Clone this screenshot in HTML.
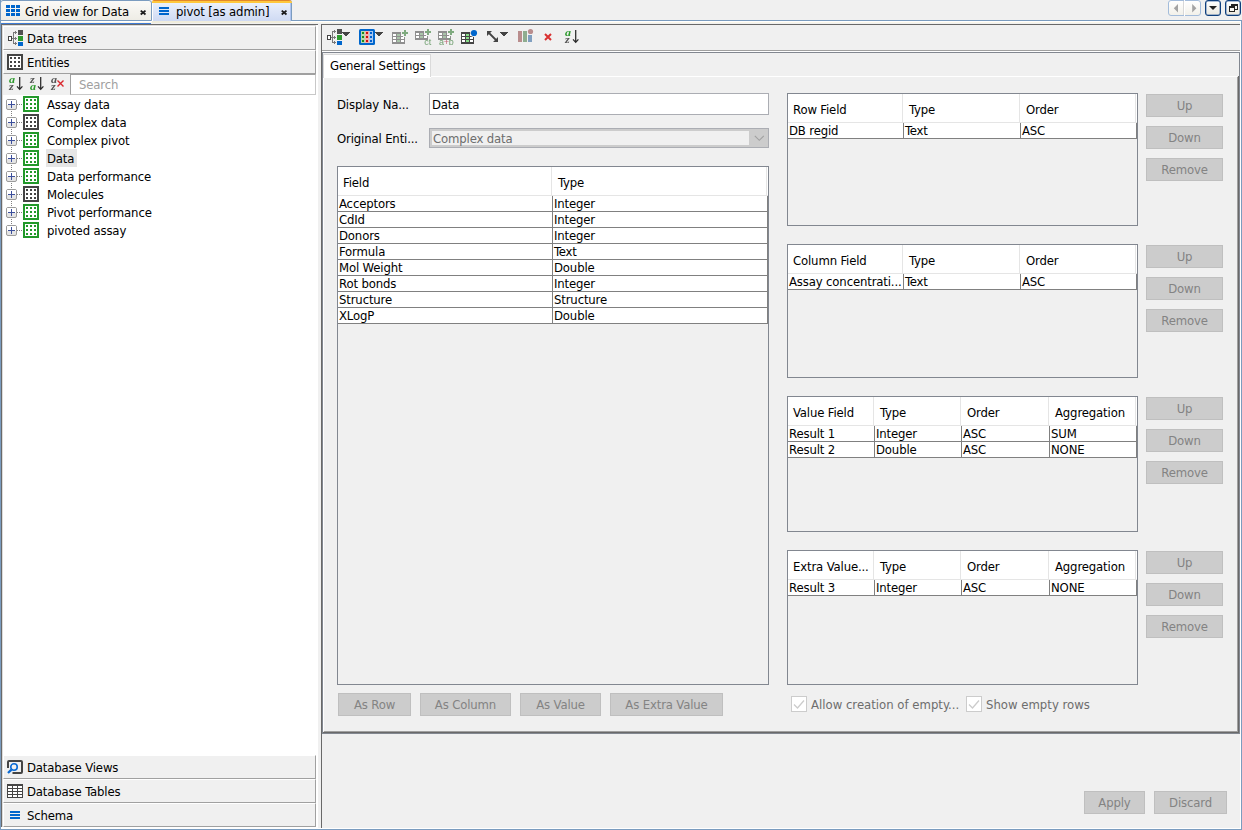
<!DOCTYPE html>
<html><head><meta charset="utf-8"><title>pivot</title><style>
html,body{margin:0;padding:0}
body{width:1242px;height:830px;overflow:hidden;background:#f0f0f0;position:relative;font-family:"DejaVu Sans Condensed","DejaVu Sans","Liberation Sans",sans-serif;font-size:13px;font-stretch:condensed;line-height:16px;letter-spacing:-0.15px;color:#000}
.a{position:absolute;box-sizing:border-box}
.t{position:absolute;white-space:nowrap;line-height:16px;height:16px}
svg{position:absolute;overflow:visible}
.btn{position:absolute;box-sizing:border-box;background:#cccccc;border:1px solid #bfbfbf;color:#838383;text-align:center;line-height:16px;white-space:nowrap}
.btn span{position:relative;display:block}
</style></head><body>
<div class="a" style="left:0px;top:0px;width:1px;height:830px;background:#7b9cbf"></div>
<div class="a" style="left:1px;top:828px;width:1240px;height:1px;background:#ffffff"></div>
<div class="a" style="left:0px;top:829px;width:1242px;height:1px;background:#7b9cbf"></div>
<div class="a" style="left:1241px;top:20px;width:1px;height:810px;background:#7b9cbf"></div>
<div class="a" style="left:0px;top:0px;width:152px;height:21px;background:linear-gradient(#fbfaf7,#eeece5);border:1px solid #7b9cbf;border-radius:3px 3px 0 0"></div>
<svg style="left:6px;top:5px" width="14" height="11" shape-rendering="crispEdges"><rect x="0" y="0" width="4" height="3" fill="#0066cc"/><rect x="5" y="0" width="4" height="3" fill="#0066cc"/><rect x="10" y="0" width="4" height="3" fill="#0066cc"/><rect x="0" y="4" width="4" height="3" fill="#0066cc"/><rect x="5" y="4" width="4" height="3" fill="#0066cc"/><rect x="10" y="4" width="4" height="3" fill="#0066cc"/><rect x="0" y="8" width="4" height="3" fill="#0066cc"/><rect x="5" y="8" width="4" height="3" fill="#0066cc"/><rect x="10" y="8" width="4" height="3" fill="#0066cc"/></svg>
<div class="t" style="left:25px;top:4px;">Grid view for Data</div>
<div class="a" style="left:152px;top:0px;width:140px;height:21px;background:linear-gradient(#eef3fd,#cfdaf3);border-left:1px solid #fff;border-right:1px solid #7b9cbf;border-radius:0 3px 0 0"></div>
<div class="a" style="left:290px;top:3px;width:1px;height:18px;background:#aec4f0"></div>
<div class="a" style="left:152px;top:0px;width:140px;height:3px;background:linear-gradient(#e2872b 0,#e2872b 1px,#ffc83d 1px,#ffc83d 3px);border-radius:2px 3px 0 0"></div>
<div class="a" style="left:152px;top:21px;width:139px;height:2px;background:#efecdc"></div>
<svg style="left:159px;top:7px" width="10" height="8" shape-rendering="crispEdges"><rect x="0" y="0" width="10" height="2" fill="#0066cc"/><rect x="0" y="3" width="10" height="2" fill="#0066cc"/><rect x="0" y="6" width="10" height="2" fill="#0066cc"/></svg>
<div class="t" style="left:176px;top:4px;">pivot [as admin]</div>
<svg style="left:140px;top:10px" width="6" height="5"><path d="M0.7 0.6 L5.5 4.5 M5.5 0.6 L0.7 4.5" stroke="#1a1a1a" stroke-width="1.8" fill="none"/></svg>
<svg style="left:281px;top:10px" width="6" height="5"><path d="M0.7 0.6 L5.5 4.5 M5.5 0.6 L0.7 4.5" stroke="#1a1a1a" stroke-width="1.8" fill="none"/></svg>
<div class="a" style="left:292px;top:20px;width:950px;height:1px;background:#7b9cbf"></div>
<div class="a" style="left:1px;top:21px;width:151px;height:1px;background:#ffffff"></div>
<div class="a" style="left:291px;top:21px;width:950px;height:1px;background:#ffffff"></div>
<div class="a" style="left:1px;top:22px;width:151px;height:1px;background:#fbf7ea"></div>
<div class="a" style="left:291px;top:22px;width:950px;height:1px;background:#fbf7ea"></div>
<div class="a" style="left:1px;top:23px;width:150px;height:1px;background:#3f7cd8"></div>
<div class="a" style="left:1px;top:24px;width:317px;height:1px;background:#696969"></div>
<div class="a" style="left:321px;top:24px;width:919px;height:1px;background:#696969"></div>
<div class="a" style="left:1px;top:24px;width:1px;height:804px;background:#696969"></div>
<div class="a" style="left:2px;top:25px;width:1px;height:803px;background:#dcdcdc"></div>
<div class="a" style="left:2px;top:25px;width:314px;height:1px;background:#dcdcdc"></div>
<div class="a" style="left:316px;top:25px;width:1px;height:803px;background:#ffffff"></div>
<div class="a" style="left:317px;top:25px;width:1px;height:803px;background:#ffffff"></div>
<div class="a" style="left:1px;top:827px;width:317px;height:1px;background:#ffffff"></div>
<div class="a" style="left:3px;top:26px;width:313px;height:24px;border-left:1px solid #fff;border-top:1px solid #fff;border-right:1px solid #a0a0a0;border-bottom:1px solid #a0a0a0;background:#f0f0f0"></div>
<svg style="left:8px;top:30px" width="16" height="16" shape-rendering="crispEdges"><rect x="0" y="6" width="4" height="5" fill="#444"/><rect x="1" y="7" width="2" height="3" fill="#fff"/><path d="M4 8H5V9H4Z M5 2H6V14H5Z M6 2H9V3H6Z M6 8H9V9H6Z M6 13H9V14H6Z M7 1H8V4H7Z M7 7H8V10H7Z M7 12H8V15H7Z" fill="#787878"/><rect x="10" y="0" width="5" height="5" fill="#505050"/><rect x="10" y="6" width="5" height="5" fill="#2e9a2e"/><rect x="10" y="12" width="5" height="4" fill="#0066cc"/></svg>
<div class="t" style="left:27px;top:31px;">Data trees</div>
<div class="a" style="left:3px;top:50px;width:313px;height:24px;border-left:1px solid #fff;border-top:1px solid #fff;border-right:1px solid #a0a0a0;border-bottom:1px solid #a0a0a0;background:#f0f0f0"></div>
<svg style="left:7px;top:54px" width="16" height="16" shape-rendering="crispEdges"><rect x="0" y="0" width="16" height="16" fill="#444444"/><rect x="2" y="2" width="12" height="12" fill="#fff"/><rect x="3" y="3" width="2" height="2" fill="#444444"/><rect x="7" y="3" width="2" height="2" fill="#444444"/><rect x="11" y="3" width="2" height="2" fill="#444444"/><rect x="3" y="7" width="2" height="2" fill="#444444"/><rect x="7" y="7" width="2" height="2" fill="#444444"/><rect x="11" y="7" width="2" height="2" fill="#444444"/><rect x="3" y="11" width="2" height="2" fill="#444444"/><rect x="7" y="11" width="2" height="2" fill="#444444"/><rect x="11" y="11" width="2" height="2" fill="#444444"/></svg>
<div class="t" style="left:27px;top:55px;">Entities</div>
<div class="a" style="left:70px;top:74px;width:246px;height:21px;background:#fff;border:1px solid #a0a0a0;border-right-color:#c8c8c8;border-bottom-color:#c8c8c8"></div>
<div class="t" style="left:79px;top:77px;color:#a0a0a0;">Search</div>
<svg style="left:9px;top:77px;will-change:transform" width="16" height="14"><text x="0" y="6" transform="scale(1.1,1)" font-family="Liberation Serif,serif" font-style="italic" font-weight="bold" font-size="11" fill="#2e9a2e" letter-spacing="0">a</text><text x="0" y="13" transform="scale(1.1,1)" font-family="Liberation Serif,serif" font-style="italic" font-weight="bold" font-size="11" fill="#555" letter-spacing="0">z</text><path d="M10.7 0V12.3 M8 9.4L10.7 12.4L13.4 9.4" stroke="#2a2a2a" stroke-width="1.25" fill="none"/></svg>
<svg style="left:30px;top:77px;will-change:transform" width="16" height="14"><text x="0" y="6" transform="scale(1.1,1)" font-family="Liberation Serif,serif" font-style="italic" font-weight="bold" font-size="11" fill="#555" letter-spacing="0">z</text><text x="0" y="13" transform="scale(1.1,1)" font-family="Liberation Serif,serif" font-style="italic" font-weight="bold" font-size="11" fill="#2e9a2e" letter-spacing="0">a</text><path d="M10.7 0V12.3 M8 9.4L10.7 12.4L13.4 9.4" stroke="#2a2a2a" stroke-width="1.25" fill="none"/></svg>
<svg style="left:51px;top:77px;will-change:transform" width="16" height="14"><text x="0" y="6" transform="scale(1.1,1)" font-family="Liberation Serif,serif" font-style="italic" font-weight="bold" font-size="11" fill="#555" letter-spacing="0">a</text><text x="0" y="13" transform="scale(1.1,1)" font-family="Liberation Serif,serif" font-style="italic" font-weight="bold" font-size="11" fill="#555" letter-spacing="0">z</text></svg>
<svg style="left:57px;top:80px" width="7" height="7"><path d="M0.5 0.5L6.5 6.5M6.5 0.5L0.5 6.5" stroke="#d9262c" stroke-width="1.4" fill="none"/></svg>
<div class="a" style="left:3px;top:95px;width:313px;height:661px;background:#fff"></div>
<svg style="left:6px;top:99px" width="16" height="18" shape-rendering="crispEdges"><rect x="0.5" y="0.5" width="10" height="10" rx="1.5" fill="#e4e4e4" stroke="#9b9b9b" shape-rendering="auto"/><rect x="1" y="1" width="9" height="5" fill="#fff"/><path d="M2 5.5H9 M5.5 2V9" stroke="#3c4f9c" fill="none"/><path d="M11 5.5H12 M13 5.5H14 M15 5.5H16" stroke="#808080"/><path d="M5.5 12V13 M5.5 14V15 M5.5 16V17" stroke="#808080"/></svg>
<svg style="left:23px;top:96px" width="16" height="16" shape-rendering="crispEdges"><rect x="0" y="0" width="16" height="16" fill="#22992a"/><rect x="2" y="2" width="12" height="12" fill="#fff"/><rect x="3" y="3" width="2" height="2" fill="#22992a"/><rect x="7" y="3" width="2" height="2" fill="#22992a"/><rect x="11" y="3" width="2" height="2" fill="#22992a"/><rect x="3" y="7" width="2" height="2" fill="#22992a"/><rect x="7" y="7" width="2" height="2" fill="#22992a"/><rect x="11" y="7" width="2" height="2" fill="#22992a"/><rect x="3" y="11" width="2" height="2" fill="#22992a"/><rect x="7" y="11" width="2" height="2" fill="#22992a"/><rect x="11" y="11" width="2" height="2" fill="#22992a"/></svg>
<div class="t" style="left:47px;top:97px;">Assay data</div>
<svg style="left:6px;top:117px" width="16" height="18" shape-rendering="crispEdges"><rect x="0.5" y="0.5" width="10" height="10" rx="1.5" fill="#e4e4e4" stroke="#9b9b9b" shape-rendering="auto"/><rect x="1" y="1" width="9" height="5" fill="#fff"/><path d="M2 5.5H9 M5.5 2V9" stroke="#3c4f9c" fill="none"/><path d="M11 5.5H12 M13 5.5H14 M15 5.5H16" stroke="#808080"/><path d="M5.5 12V13 M5.5 14V15 M5.5 16V17" stroke="#808080"/></svg>
<svg style="left:23px;top:114px" width="16" height="16" shape-rendering="crispEdges"><rect x="0" y="0" width="16" height="16" fill="#444444"/><rect x="2" y="2" width="12" height="12" fill="#fff"/><rect x="3" y="3" width="2" height="2" fill="#444444"/><rect x="7" y="3" width="2" height="2" fill="#444444"/><rect x="11" y="3" width="2" height="2" fill="#444444"/><rect x="3" y="7" width="2" height="2" fill="#444444"/><rect x="7" y="7" width="2" height="2" fill="#444444"/><rect x="11" y="7" width="2" height="2" fill="#444444"/><rect x="3" y="11" width="2" height="2" fill="#444444"/><rect x="7" y="11" width="2" height="2" fill="#444444"/><rect x="11" y="11" width="2" height="2" fill="#444444"/></svg>
<div class="t" style="left:47px;top:115px;">Complex data</div>
<svg style="left:6px;top:135px" width="16" height="18" shape-rendering="crispEdges"><rect x="0.5" y="0.5" width="10" height="10" rx="1.5" fill="#e4e4e4" stroke="#9b9b9b" shape-rendering="auto"/><rect x="1" y="1" width="9" height="5" fill="#fff"/><path d="M2 5.5H9 M5.5 2V9" stroke="#3c4f9c" fill="none"/><path d="M11 5.5H12 M13 5.5H14 M15 5.5H16" stroke="#808080"/><path d="M5.5 12V13 M5.5 14V15 M5.5 16V17" stroke="#808080"/></svg>
<svg style="left:23px;top:132px" width="16" height="16" shape-rendering="crispEdges"><rect x="0" y="0" width="16" height="16" fill="#22992a"/><rect x="2" y="2" width="12" height="12" fill="#fff"/><rect x="3" y="3" width="2" height="2" fill="#22992a"/><rect x="7" y="3" width="2" height="2" fill="#22992a"/><rect x="11" y="3" width="2" height="2" fill="#22992a"/><rect x="3" y="7" width="2" height="2" fill="#22992a"/><rect x="7" y="7" width="2" height="2" fill="#22992a"/><rect x="11" y="7" width="2" height="2" fill="#22992a"/><rect x="3" y="11" width="2" height="2" fill="#22992a"/><rect x="7" y="11" width="2" height="2" fill="#22992a"/><rect x="11" y="11" width="2" height="2" fill="#22992a"/></svg>
<div class="t" style="left:47px;top:133px;">Complex pivot</div>
<svg style="left:6px;top:153px" width="16" height="18" shape-rendering="crispEdges"><rect x="0.5" y="0.5" width="10" height="10" rx="1.5" fill="#e4e4e4" stroke="#9b9b9b" shape-rendering="auto"/><rect x="1" y="1" width="9" height="5" fill="#fff"/><path d="M2 5.5H9 M5.5 2V9" stroke="#3c4f9c" fill="none"/><path d="M11 5.5H12 M13 5.5H14 M15 5.5H16" stroke="#808080"/><path d="M5.5 12V13 M5.5 14V15 M5.5 16V17" stroke="#808080"/></svg>
<svg style="left:23px;top:150px" width="16" height="16" shape-rendering="crispEdges"><rect x="0" y="0" width="16" height="16" fill="#22992a"/><rect x="2" y="2" width="12" height="12" fill="#fff"/><rect x="3" y="3" width="2" height="2" fill="#22992a"/><rect x="7" y="3" width="2" height="2" fill="#22992a"/><rect x="11" y="3" width="2" height="2" fill="#22992a"/><rect x="3" y="7" width="2" height="2" fill="#22992a"/><rect x="7" y="7" width="2" height="2" fill="#22992a"/><rect x="11" y="7" width="2" height="2" fill="#22992a"/><rect x="3" y="11" width="2" height="2" fill="#22992a"/><rect x="7" y="11" width="2" height="2" fill="#22992a"/><rect x="11" y="11" width="2" height="2" fill="#22992a"/></svg>
<div class="a" style="left:46px;top:149px;width:31px;height:18px;background:#e5e5e5"></div>
<div class="t" style="left:47px;top:151px;">Data</div>
<svg style="left:6px;top:171px" width="16" height="18" shape-rendering="crispEdges"><rect x="0.5" y="0.5" width="10" height="10" rx="1.5" fill="#e4e4e4" stroke="#9b9b9b" shape-rendering="auto"/><rect x="1" y="1" width="9" height="5" fill="#fff"/><path d="M2 5.5H9 M5.5 2V9" stroke="#3c4f9c" fill="none"/><path d="M11 5.5H12 M13 5.5H14 M15 5.5H16" stroke="#808080"/><path d="M5.5 12V13 M5.5 14V15 M5.5 16V17" stroke="#808080"/></svg>
<svg style="left:23px;top:168px" width="16" height="16" shape-rendering="crispEdges"><rect x="0" y="0" width="16" height="16" fill="#22992a"/><rect x="2" y="2" width="12" height="12" fill="#fff"/><rect x="3" y="3" width="2" height="2" fill="#22992a"/><rect x="7" y="3" width="2" height="2" fill="#22992a"/><rect x="11" y="3" width="2" height="2" fill="#22992a"/><rect x="3" y="7" width="2" height="2" fill="#22992a"/><rect x="7" y="7" width="2" height="2" fill="#22992a"/><rect x="11" y="7" width="2" height="2" fill="#22992a"/><rect x="3" y="11" width="2" height="2" fill="#22992a"/><rect x="7" y="11" width="2" height="2" fill="#22992a"/><rect x="11" y="11" width="2" height="2" fill="#22992a"/></svg>
<div class="t" style="left:47px;top:169px;">Data performance</div>
<svg style="left:6px;top:189px" width="16" height="18" shape-rendering="crispEdges"><rect x="0.5" y="0.5" width="10" height="10" rx="1.5" fill="#e4e4e4" stroke="#9b9b9b" shape-rendering="auto"/><rect x="1" y="1" width="9" height="5" fill="#fff"/><path d="M2 5.5H9 M5.5 2V9" stroke="#3c4f9c" fill="none"/><path d="M11 5.5H12 M13 5.5H14 M15 5.5H16" stroke="#808080"/><path d="M5.5 12V13 M5.5 14V15 M5.5 16V17" stroke="#808080"/></svg>
<svg style="left:23px;top:186px" width="16" height="16" shape-rendering="crispEdges"><rect x="0" y="0" width="16" height="16" fill="#444444"/><rect x="2" y="2" width="12" height="12" fill="#fff"/><rect x="3" y="3" width="2" height="2" fill="#444444"/><rect x="7" y="3" width="2" height="2" fill="#444444"/><rect x="11" y="3" width="2" height="2" fill="#444444"/><rect x="3" y="7" width="2" height="2" fill="#444444"/><rect x="7" y="7" width="2" height="2" fill="#444444"/><rect x="11" y="7" width="2" height="2" fill="#444444"/><rect x="3" y="11" width="2" height="2" fill="#444444"/><rect x="7" y="11" width="2" height="2" fill="#444444"/><rect x="11" y="11" width="2" height="2" fill="#444444"/></svg>
<div class="t" style="left:47px;top:187px;">Molecules</div>
<svg style="left:6px;top:207px" width="16" height="18" shape-rendering="crispEdges"><rect x="0.5" y="0.5" width="10" height="10" rx="1.5" fill="#e4e4e4" stroke="#9b9b9b" shape-rendering="auto"/><rect x="1" y="1" width="9" height="5" fill="#fff"/><path d="M2 5.5H9 M5.5 2V9" stroke="#3c4f9c" fill="none"/><path d="M11 5.5H12 M13 5.5H14 M15 5.5H16" stroke="#808080"/><path d="M5.5 12V13 M5.5 14V15 M5.5 16V17" stroke="#808080"/></svg>
<svg style="left:23px;top:204px" width="16" height="16" shape-rendering="crispEdges"><rect x="0" y="0" width="16" height="16" fill="#22992a"/><rect x="2" y="2" width="12" height="12" fill="#fff"/><rect x="3" y="3" width="2" height="2" fill="#22992a"/><rect x="7" y="3" width="2" height="2" fill="#22992a"/><rect x="11" y="3" width="2" height="2" fill="#22992a"/><rect x="3" y="7" width="2" height="2" fill="#22992a"/><rect x="7" y="7" width="2" height="2" fill="#22992a"/><rect x="11" y="7" width="2" height="2" fill="#22992a"/><rect x="3" y="11" width="2" height="2" fill="#22992a"/><rect x="7" y="11" width="2" height="2" fill="#22992a"/><rect x="11" y="11" width="2" height="2" fill="#22992a"/></svg>
<div class="t" style="left:47px;top:205px;">Pivot performance</div>
<svg style="left:6px;top:225px" width="16" height="18" shape-rendering="crispEdges"><rect x="0.5" y="0.5" width="10" height="10" rx="1.5" fill="#e4e4e4" stroke="#9b9b9b" shape-rendering="auto"/><rect x="1" y="1" width="9" height="5" fill="#fff"/><path d="M2 5.5H9 M5.5 2V9" stroke="#3c4f9c" fill="none"/><path d="M11 5.5H12 M13 5.5H14 M15 5.5H16" stroke="#808080"/></svg>
<svg style="left:23px;top:222px" width="16" height="16" shape-rendering="crispEdges"><rect x="0" y="0" width="16" height="16" fill="#22992a"/><rect x="2" y="2" width="12" height="12" fill="#fff"/><rect x="3" y="3" width="2" height="2" fill="#22992a"/><rect x="7" y="3" width="2" height="2" fill="#22992a"/><rect x="11" y="3" width="2" height="2" fill="#22992a"/><rect x="3" y="7" width="2" height="2" fill="#22992a"/><rect x="7" y="7" width="2" height="2" fill="#22992a"/><rect x="11" y="7" width="2" height="2" fill="#22992a"/><rect x="3" y="11" width="2" height="2" fill="#22992a"/><rect x="7" y="11" width="2" height="2" fill="#22992a"/><rect x="11" y="11" width="2" height="2" fill="#22992a"/></svg>
<div class="t" style="left:47px;top:223px;">pivoted assay</div>
<div class="a" style="left:3px;top:755px;width:313px;height:24px;border-left:1px solid #fff;border-top:1px solid #fff;border-right:1px solid #a0a0a0;border-bottom:1px solid #a0a0a0;background:#f0f0f0"></div>
<svg style="left:7px;top:760px" width="16" height="14"><path d="M1 8V2Q1 1 2 1H14Q15 1 15 2V12Q15 13 14 13H5.5" fill="none" stroke="#444" stroke-width="2"/><circle cx="7" cy="7" r="3.25" fill="none" stroke="#0a6ad4" stroke-width="1.6"/><path d="M4.5 9.7 L1 13" stroke="#0a6ad4" stroke-width="2.3"/></svg>
<div class="t" style="left:27px;top:760px;">Database Views</div>
<div class="a" style="left:3px;top:779px;width:313px;height:24px;border-left:1px solid #fff;border-top:1px solid #fff;border-right:1px solid #a0a0a0;border-bottom:1px solid #a0a0a0;background:#f0f0f0"></div>
<svg style="left:7px;top:784px" width="16" height="14" shape-rendering="crispEdges"><rect x="0" y="0" width="16" height="14" rx="1" fill="#444"/><rect x="1" y="2" width="4" height="2" fill="#fff"/><rect x="6" y="2" width="4" height="2" fill="#fff"/><rect x="11" y="2" width="4" height="2" fill="#fff"/><rect x="1" y="5" width="4" height="2" fill="#fff"/><rect x="6" y="5" width="4" height="2" fill="#fff"/><rect x="11" y="5" width="4" height="2" fill="#fff"/><rect x="1" y="8" width="4" height="2" fill="#fff"/><rect x="6" y="8" width="4" height="2" fill="#fff"/><rect x="11" y="8" width="4" height="2" fill="#fff"/><rect x="1" y="11" width="4" height="2" fill="#fff"/><rect x="6" y="11" width="4" height="2" fill="#fff"/><rect x="11" y="11" width="4" height="2" fill="#fff"/></svg>
<div class="t" style="left:27px;top:784px;">Database Tables</div>
<div class="a" style="left:3px;top:803px;width:313px;height:24px;border-left:1px solid #fff;border-top:1px solid #fff;border-right:1px solid #a0a0a0;border-bottom:1px solid #a0a0a0;background:#f0f0f0"></div>
<svg style="left:10px;top:811px" width="10" height="8" shape-rendering="crispEdges"><rect x="0" y="0" width="10" height="2" fill="#0066cc"/><rect x="0" y="3" width="10" height="2" fill="#0066cc"/><rect x="0" y="6" width="10" height="2" fill="#0066cc"/></svg>
<div class="t" style="left:27px;top:808px;">Schema</div>
<div class="a" style="left:321px;top:24px;width:1px;height:804px;background:#696969"></div>
<div class="a" style="left:1240px;top:21px;width:1px;height:807px;background:#ffffff"></div>
<div class="a" style="left:322px;top:50px;width:918px;height:1px;background:#a0a0a0"></div>
<div class="a" style="left:322px;top:51px;width:918px;height:1px;background:#ffffff"></div>
<div class="a" style="left:322px;top:52px;width:918px;height:682px;border:1px solid #828790"></div>
<div class="a" style="left:323px;top:76px;width:914px;height:1px;background:#fff"></div>
<div class="a" style="left:323px;top:76px;width:1px;height:655px;background:#fff"></div>
<div class="a" style="left:323px;top:54px;width:108px;height:24px;background:#fff;border:1px solid #dadada;border-bottom:none"></div>
<div class="a" style="left:430px;top:77px;width:1px;height:1px;background:#fff"></div>
<div class="t" style="left:330px;top:58px;">General Settings</div>
<div class="a" style="left:1237px;top:77px;width:1px;height:656px;background:#a0a0a0"></div>
<div class="a" style="left:1238px;top:76px;width:1px;height:657px;background:#696969"></div>
<div class="a" style="left:324px;top:731px;width:914px;height:1px;background:#a0a0a0"></div>
<div class="a" style="left:323px;top:732px;width:916px;height:1px;background:#696969"></div>
<div class="t" style="left:337px;top:97px;">Display Na...</div>
<div class="a" style="left:429px;top:93px;width:340px;height:22px;background:#fff;border:1px solid #abadb3"></div>
<div class="t" style="left:432px;top:97px;">Data</div>
<div class="t" style="left:337px;top:131px;">Original Enti...</div>
<div class="a" style="left:429px;top:128px;width:340px;height:20px;background:#cccccc;border:1px solid #abadb3"></div>
<div class="a" style="left:432px;top:131px;width:317px;height:14px;background:#f0f0f0"></div>
<div class="t" style="left:433px;top:131px;color:#6d6d6d;">Complex data</div>
<svg style="left:754px;top:135px" width="11" height="7"><path d="M0.8 0.8L5.3 5.3L9.8 0.8" stroke="#a0a0a0" stroke-width="1.1" fill="none"/></svg>
<div class="a" style="left:337px;top:166px;width:432px;height:519px;border:1px solid #828790;background:#f0f0f0"></div>
<div class="a" style="left:338px;top:167px;width:430px;height:28px;background:#fff"></div>
<div class="a" style="left:338px;top:195px;width:430px;height:1px;background:#e5e5e5"></div>
<div class="a" style="left:551px;top:167px;width:1px;height:28px;background:#e5e5e5"></div>
<div class="t" style="left:343px;top:175px;">Field</div>
<div class="a" style="left:766px;top:167px;width:1px;height:28px;background:#e5e5e5"></div>
<div class="t" style="left:558px;top:175px;">Type</div>
<div class="a" style="left:338px;top:196px;width:430px;height:15px;background:#fff"></div>
<div class="a" style="left:338px;top:211px;width:430px;height:1px;background:#808080"></div>
<div class="a" style="left:552px;top:196px;width:1px;height:16px;background:#808080"></div>
<div class="t" style="left:339px;top:196px;">Acceptors</div>
<div class="a" style="left:767px;top:196px;width:1px;height:16px;background:#808080"></div>
<div class="t" style="left:554px;top:196px;">Integer</div>
<div class="a" style="left:338px;top:212px;width:430px;height:15px;background:#fff"></div>
<div class="a" style="left:338px;top:227px;width:430px;height:1px;background:#808080"></div>
<div class="a" style="left:552px;top:212px;width:1px;height:16px;background:#808080"></div>
<div class="t" style="left:339px;top:212px;">CdId</div>
<div class="a" style="left:767px;top:212px;width:1px;height:16px;background:#808080"></div>
<div class="t" style="left:554px;top:212px;">Integer</div>
<div class="a" style="left:338px;top:228px;width:430px;height:15px;background:#fff"></div>
<div class="a" style="left:338px;top:243px;width:430px;height:1px;background:#808080"></div>
<div class="a" style="left:552px;top:228px;width:1px;height:16px;background:#808080"></div>
<div class="t" style="left:339px;top:228px;">Donors</div>
<div class="a" style="left:767px;top:228px;width:1px;height:16px;background:#808080"></div>
<div class="t" style="left:554px;top:228px;">Integer</div>
<div class="a" style="left:338px;top:244px;width:430px;height:15px;background:#fff"></div>
<div class="a" style="left:338px;top:259px;width:430px;height:1px;background:#808080"></div>
<div class="a" style="left:552px;top:244px;width:1px;height:16px;background:#808080"></div>
<div class="t" style="left:339px;top:244px;">Formula</div>
<div class="a" style="left:767px;top:244px;width:1px;height:16px;background:#808080"></div>
<div class="t" style="left:554px;top:244px;">Text</div>
<div class="a" style="left:338px;top:260px;width:430px;height:15px;background:#fff"></div>
<div class="a" style="left:338px;top:275px;width:430px;height:1px;background:#808080"></div>
<div class="a" style="left:552px;top:260px;width:1px;height:16px;background:#808080"></div>
<div class="t" style="left:339px;top:260px;">Mol Weight</div>
<div class="a" style="left:767px;top:260px;width:1px;height:16px;background:#808080"></div>
<div class="t" style="left:554px;top:260px;">Double</div>
<div class="a" style="left:338px;top:276px;width:430px;height:15px;background:#fff"></div>
<div class="a" style="left:338px;top:291px;width:430px;height:1px;background:#808080"></div>
<div class="a" style="left:552px;top:276px;width:1px;height:16px;background:#808080"></div>
<div class="t" style="left:339px;top:276px;">Rot bonds</div>
<div class="a" style="left:767px;top:276px;width:1px;height:16px;background:#808080"></div>
<div class="t" style="left:554px;top:276px;">Integer</div>
<div class="a" style="left:338px;top:292px;width:430px;height:15px;background:#fff"></div>
<div class="a" style="left:338px;top:307px;width:430px;height:1px;background:#808080"></div>
<div class="a" style="left:552px;top:292px;width:1px;height:16px;background:#808080"></div>
<div class="t" style="left:339px;top:292px;">Structure</div>
<div class="a" style="left:767px;top:292px;width:1px;height:16px;background:#808080"></div>
<div class="t" style="left:554px;top:292px;">Structure</div>
<div class="a" style="left:338px;top:308px;width:430px;height:15px;background:#fff"></div>
<div class="a" style="left:338px;top:323px;width:430px;height:1px;background:#808080"></div>
<div class="a" style="left:552px;top:308px;width:1px;height:16px;background:#808080"></div>
<div class="t" style="left:339px;top:308px;">XLogP</div>
<div class="a" style="left:767px;top:308px;width:1px;height:16px;background:#808080"></div>
<div class="t" style="left:554px;top:308px;">Double</div>
<div class="a" style="left:787px;top:93px;width:351px;height:133px;border:1px solid #828790;background:#f0f0f0"></div>
<div class="a" style="left:788px;top:94px;width:349px;height:28px;background:#fff"></div>
<div class="a" style="left:788px;top:122px;width:349px;height:1px;background:#e5e5e5"></div>
<div class="a" style="left:902px;top:94px;width:1px;height:28px;background:#e5e5e5"></div>
<div class="t" style="left:793px;top:102px;">Row Field</div>
<div class="a" style="left:1019px;top:94px;width:1px;height:28px;background:#e5e5e5"></div>
<div class="t" style="left:909px;top:102px;">Type</div>
<div class="a" style="left:1135px;top:94px;width:1px;height:28px;background:#e5e5e5"></div>
<div class="t" style="left:1026px;top:102px;">Order</div>
<div class="a" style="left:788px;top:123px;width:349px;height:15px;background:#fff"></div>
<div class="a" style="left:788px;top:138px;width:349px;height:1px;background:#808080"></div>
<div class="a" style="left:903px;top:123px;width:1px;height:16px;background:#808080"></div>
<div class="t" style="left:789px;top:123px;">DB regid</div>
<div class="a" style="left:1020px;top:123px;width:1px;height:16px;background:#808080"></div>
<div class="t" style="left:905px;top:123px;">Text</div>
<div class="a" style="left:1136px;top:123px;width:1px;height:16px;background:#808080"></div>
<div class="t" style="left:1022px;top:123px;">ASC</div>
<div class="a" style="left:787px;top:244px;width:351px;height:134px;border:1px solid #828790;background:#f0f0f0"></div>
<div class="a" style="left:788px;top:245px;width:349px;height:28px;background:#fff"></div>
<div class="a" style="left:788px;top:273px;width:349px;height:1px;background:#e5e5e5"></div>
<div class="a" style="left:902px;top:245px;width:1px;height:28px;background:#e5e5e5"></div>
<div class="t" style="left:793px;top:253px;">Column Field</div>
<div class="a" style="left:1019px;top:245px;width:1px;height:28px;background:#e5e5e5"></div>
<div class="t" style="left:909px;top:253px;">Type</div>
<div class="a" style="left:1135px;top:245px;width:1px;height:28px;background:#e5e5e5"></div>
<div class="t" style="left:1026px;top:253px;">Order</div>
<div class="a" style="left:788px;top:274px;width:349px;height:15px;background:#fff"></div>
<div class="a" style="left:788px;top:289px;width:349px;height:1px;background:#808080"></div>
<div class="a" style="left:903px;top:274px;width:1px;height:16px;background:#808080"></div>
<div class="t" style="left:789px;top:274px;">Assay concentrati...</div>
<div class="a" style="left:1020px;top:274px;width:1px;height:16px;background:#808080"></div>
<div class="t" style="left:905px;top:274px;">Text</div>
<div class="a" style="left:1136px;top:274px;width:1px;height:16px;background:#808080"></div>
<div class="t" style="left:1022px;top:274px;">ASC</div>
<div class="a" style="left:787px;top:396px;width:351px;height:136px;border:1px solid #828790;background:#f0f0f0"></div>
<div class="a" style="left:788px;top:397px;width:349px;height:28px;background:#fff"></div>
<div class="a" style="left:788px;top:425px;width:349px;height:1px;background:#e5e5e5"></div>
<div class="a" style="left:873px;top:397px;width:1px;height:28px;background:#e5e5e5"></div>
<div class="t" style="left:793px;top:405px;">Value Field</div>
<div class="a" style="left:960px;top:397px;width:1px;height:28px;background:#e5e5e5"></div>
<div class="t" style="left:880px;top:405px;">Type</div>
<div class="a" style="left:1048px;top:397px;width:1px;height:28px;background:#e5e5e5"></div>
<div class="t" style="left:967px;top:405px;">Order</div>
<div class="a" style="left:1135px;top:397px;width:1px;height:28px;background:#e5e5e5"></div>
<div class="t" style="left:1055px;top:405px;">Aggregation</div>
<div class="a" style="left:788px;top:426px;width:349px;height:15px;background:#fff"></div>
<div class="a" style="left:788px;top:441px;width:349px;height:1px;background:#808080"></div>
<div class="a" style="left:874px;top:426px;width:1px;height:16px;background:#808080"></div>
<div class="t" style="left:789px;top:426px;">Result 1</div>
<div class="a" style="left:961px;top:426px;width:1px;height:16px;background:#808080"></div>
<div class="t" style="left:876px;top:426px;">Integer</div>
<div class="a" style="left:1049px;top:426px;width:1px;height:16px;background:#808080"></div>
<div class="t" style="left:963px;top:426px;">ASC</div>
<div class="a" style="left:1136px;top:426px;width:1px;height:16px;background:#808080"></div>
<div class="t" style="left:1051px;top:426px;">SUM</div>
<div class="a" style="left:788px;top:442px;width:349px;height:15px;background:#fff"></div>
<div class="a" style="left:788px;top:457px;width:349px;height:1px;background:#808080"></div>
<div class="a" style="left:874px;top:442px;width:1px;height:16px;background:#808080"></div>
<div class="t" style="left:789px;top:442px;">Result 2</div>
<div class="a" style="left:961px;top:442px;width:1px;height:16px;background:#808080"></div>
<div class="t" style="left:876px;top:442px;">Double</div>
<div class="a" style="left:1049px;top:442px;width:1px;height:16px;background:#808080"></div>
<div class="t" style="left:963px;top:442px;">ASC</div>
<div class="a" style="left:1136px;top:442px;width:1px;height:16px;background:#808080"></div>
<div class="t" style="left:1051px;top:442px;">NONE</div>
<div class="a" style="left:787px;top:550px;width:351px;height:135px;border:1px solid #828790;background:#f0f0f0"></div>
<div class="a" style="left:788px;top:551px;width:349px;height:28px;background:#fff"></div>
<div class="a" style="left:788px;top:579px;width:349px;height:1px;background:#e5e5e5"></div>
<div class="a" style="left:873px;top:551px;width:1px;height:28px;background:#e5e5e5"></div>
<div class="t" style="left:793px;top:559px;">Extra Value...</div>
<div class="a" style="left:960px;top:551px;width:1px;height:28px;background:#e5e5e5"></div>
<div class="t" style="left:880px;top:559px;">Type</div>
<div class="a" style="left:1048px;top:551px;width:1px;height:28px;background:#e5e5e5"></div>
<div class="t" style="left:967px;top:559px;">Order</div>
<div class="a" style="left:1135px;top:551px;width:1px;height:28px;background:#e5e5e5"></div>
<div class="t" style="left:1055px;top:559px;">Aggregation</div>
<div class="a" style="left:788px;top:580px;width:349px;height:15px;background:#fff"></div>
<div class="a" style="left:788px;top:595px;width:349px;height:1px;background:#808080"></div>
<div class="a" style="left:874px;top:580px;width:1px;height:16px;background:#808080"></div>
<div class="t" style="left:789px;top:580px;">Result 3</div>
<div class="a" style="left:961px;top:580px;width:1px;height:16px;background:#808080"></div>
<div class="t" style="left:876px;top:580px;">Integer</div>
<div class="a" style="left:1049px;top:580px;width:1px;height:16px;background:#808080"></div>
<div class="t" style="left:963px;top:580px;">ASC</div>
<div class="a" style="left:1136px;top:580px;width:1px;height:16px;background:#808080"></div>
<div class="t" style="left:1051px;top:580px;">NONE</div>
<div class="btn" style="left:1146px;top:94px;width:77px;height:23px"><span style="top:3px">Up</span></div>
<div class="btn" style="left:1146px;top:126px;width:77px;height:23px"><span style="top:3px">Down</span></div>
<div class="btn" style="left:1146px;top:158px;width:77px;height:23px"><span style="top:3px">Remove</span></div>
<div class="btn" style="left:1146px;top:245px;width:77px;height:23px"><span style="top:3px">Up</span></div>
<div class="btn" style="left:1146px;top:277px;width:77px;height:23px"><span style="top:3px">Down</span></div>
<div class="btn" style="left:1146px;top:309px;width:77px;height:23px"><span style="top:3px">Remove</span></div>
<div class="btn" style="left:1146px;top:397px;width:77px;height:23px"><span style="top:3px">Up</span></div>
<div class="btn" style="left:1146px;top:429px;width:77px;height:23px"><span style="top:3px">Down</span></div>
<div class="btn" style="left:1146px;top:461px;width:77px;height:23px"><span style="top:3px">Remove</span></div>
<div class="btn" style="left:1146px;top:551px;width:77px;height:23px"><span style="top:3px">Up</span></div>
<div class="btn" style="left:1146px;top:583px;width:77px;height:23px"><span style="top:3px">Down</span></div>
<div class="btn" style="left:1146px;top:615px;width:77px;height:23px"><span style="top:3px">Remove</span></div>
<div class="btn" style="left:338px;top:693px;width:73px;height:23px"><span style="top:3px">As Row</span></div>
<div class="btn" style="left:420px;top:693px;width:91px;height:23px"><span style="top:3px">As Column</span></div>
<div class="btn" style="left:520px;top:693px;width:81px;height:23px"><span style="top:3px">As Value</span></div>
<div class="btn" style="left:610px;top:693px;width:113px;height:23px"><span style="top:3px">As Extra Value</span></div>
<div class="btn" style="left:1084px;top:791px;width:61px;height:23px"><span style="top:3px">Apply</span></div>
<div class="btn" style="left:1154px;top:791px;width:73px;height:23px"><span style="top:3px">Discard</span></div>
<div class="a" style="left:791px;top:696px;width:16px;height:16px;background:#fff;border:1px solid #cccccc"></div>
<svg style="left:791px;top:696px" width="16" height="16"><path d="M3 8.5L6.5 12L13 4.5" stroke="#cccccc" stroke-width="1.3" fill="none"/></svg>
<div class="t" style="left:811px;top:697px;color:#6d6d6d;letter-spacing:0">Allow creation of empty...</div>
<div class="a" style="left:966px;top:696px;width:16px;height:16px;background:#fff;border:1px solid #cccccc"></div>
<svg style="left:966px;top:696px" width="16" height="16"><path d="M3 8.5L6.5 12L13 4.5" stroke="#cccccc" stroke-width="1.3" fill="none"/></svg>
<div class="t" style="left:986px;top:697px;color:#6d6d6d;letter-spacing:0">Show empty rows</div>
<div class="a" style="left:1168px;top:0px;width:33px;height:16px;background:linear-gradient(#ffffff,#f3f1ea);border:1px solid #a3bcdb;border-radius:3px"></div>
<div class="a" style="left:1183px;top:1px;width:1px;height:14px;background:#d8d8d8"></div>
<div class="a" style="left:1184px;top:0px;width:1px;height:16px;background:#ffffff"></div>
<svg style="left:1168px;top:0px" width="33" height="16"><path d="M10 4V12.4L5.8 8.2Z M24.2 4V12.4L28.4 8.2Z" fill="#a3a3a3"/></svg>
<div class="a" style="left:1205px;top:0px;width:16px;height:16px;background:linear-gradient(#ffffff,#ebe8df);border:1px solid #0f3f7d;border-radius:3px;box-shadow:inset 0 0 0 0.5px #5d7fae"></div>
<svg style="left:1205px;top:0px" width="16" height="16"><path d="M4 6H12L8 10Z" fill="#222"/></svg>
<div class="a" style="left:1225px;top:0px;width:16px;height:16px;background:linear-gradient(#ffffff,#ebe8df);border:1px solid #0f3f7d;border-radius:3px;box-shadow:inset 0 0 0 0.5px #5d7fae"></div>
<svg style="left:1225px;top:0px" width="16" height="16" shape-rendering="crispEdges"><rect x="6.5" y="4.5" width="6" height="5" fill="none" stroke="#222"/><rect x="6" y="4" width="7" height="2" fill="#222"/><rect x="4.5" y="6.5" width="5" height="5" fill="#f8f7f3" stroke="#222"/><rect x="4" y="6" width="6" height="2" fill="#222"/></svg>
<svg style="left:327px;top:29px" width="16" height="16" shape-rendering="crispEdges"><rect x="0" y="6" width="4" height="5" fill="#444"/><rect x="1" y="7" width="2" height="3" fill="#fff"/><path d="M4 8H5V9H4Z M5 2H6V14H5Z M6 2H9V3H6Z M6 8H9V9H6Z M6 13H9V14H6Z M7 1H8V4H7Z M7 7H8V10H7Z M7 12H8V15H7Z" fill="#787878"/><rect x="10" y="0" width="5" height="5" fill="#505050"/><rect x="10" y="6" width="5" height="5" fill="#2e9a2e"/><rect x="10" y="12" width="5" height="4" fill="#0066cc"/></svg>
<svg style="left:342px;top:32px" width="8" height="4" shape-rendering="crispEdges"><path d="M0 0H8V1H0Z M1 1H7V2H1Z M2 2H6V3H2Z M3 3H5V4H3Z" fill="#444"/></svg>
<svg style="left:359px;top:29px" width="16" height="16" shape-rendering="crispEdges"><rect x="0" y="0" width="16" height="16" rx="1.5" fill="#0066cc" shape-rendering="auto"/><rect x="2" y="2" width="4" height="12" fill="#b4d9b0"/><rect x="3" y="3" width="2" height="2" fill="#1e8a1e"/><rect x="3" y="7" width="2" height="2" fill="#1e8a1e"/><rect x="3" y="11" width="2" height="2" fill="#1e8a1e"/><rect x="6" y="2" width="4" height="12" fill="#f4b0a8"/><rect x="7" y="3" width="2" height="2" fill="#cc1111"/><rect x="7" y="7" width="2" height="2" fill="#cc1111"/><rect x="7" y="11" width="2" height="2" fill="#cc1111"/><rect x="10" y="2" width="4" height="12" fill="#a8c8f0"/><rect x="11" y="3" width="2" height="2" fill="#0060d0"/><rect x="11" y="7" width="2" height="2" fill="#0060d0"/><rect x="11" y="11" width="2" height="2" fill="#0060d0"/></svg>
<svg style="left:375px;top:32px" width="8" height="4" shape-rendering="crispEdges"><path d="M0 0H8V1H0Z M1 1H7V2H1Z M2 2H6V3H2Z M3 3H5V4H3Z" fill="#444"/></svg>
<svg style="left:392px;top:32px" width="13" height="12" shape-rendering="crispEdges"><rect x="0" y="0" width="13" height="12" rx="1" fill="#8f8f8f"/><rect x="1" y="2" width="3" height="2" fill="#fff"/><rect x="5" y="2" width="3" height="2" fill="#a9c4a9"/><rect x="9" y="2" width="3" height="2" fill="#fff"/><rect x="1" y="5" width="3" height="2" fill="#fff"/><rect x="5" y="5" width="3" height="2" fill="#a9c4a9"/><rect x="9" y="5" width="3" height="2" fill="#fff"/><rect x="1" y="8" width="3" height="2" fill="#fff"/><rect x="5" y="8" width="3" height="2" fill="#a9c4a9"/><rect x="9" y="8" width="3" height="2" fill="#fff"/></svg>
<svg style="left:401px;top:29px" width="8" height="8" shape-rendering="crispEdges"><path d="M2 0H6V2H8V6H6V8H2V6H0V2H2Z" fill="#f0f0f0"/><path d="M3 1H5V3H7V5H5V7H3V5H1V3H3Z" fill="#7faa7f"/></svg>
<svg style="left:415px;top:31px" width="13" height="9" shape-rendering="crispEdges"><rect x="0" y="0" width="13" height="9" rx="1" fill="#8f8f8f"/><rect x="1" y="2" width="3" height="2" fill="#fff"/><rect x="5" y="2" width="3" height="2" fill="#a9c4a9"/><rect x="9" y="2" width="3" height="2" fill="#fff"/><rect x="1" y="5" width="3" height="2" fill="#fff"/><rect x="5" y="5" width="3" height="2" fill="#a9c4a9"/><rect x="9" y="5" width="3" height="2" fill="#fff"/></svg>
<svg style="left:424px;top:28px" width="8" height="8" shape-rendering="crispEdges"><path d="M2 0H6V2H8V6H6V8H2V6H0V2H2Z" fill="#f0f0f0"/><path d="M3 1H5V3H7V5H5V7H3V5H1V3H3Z" fill="#7faa7f"/></svg>
<svg style="left:424px;top:36px;will-change:transform" width="10" height="10"><text x="0.2" y="8.9" font-family="Liberation Sans,sans-serif" font-size="9" fill="#6f9f6f" letter-spacing="0">ct</text></svg>
<svg style="left:438px;top:31px" width="13" height="9" shape-rendering="crispEdges"><rect x="0" y="0" width="13" height="9" rx="1" fill="#8f8f8f"/><rect x="1" y="2" width="3" height="2" fill="#fff"/><rect x="5" y="2" width="3" height="2" fill="#a9c4a9"/><rect x="9" y="2" width="3" height="2" fill="#fff"/><rect x="1" y="5" width="3" height="2" fill="#fff"/><rect x="5" y="5" width="3" height="2" fill="#a9c4a9"/><rect x="9" y="5" width="3" height="2" fill="#fff"/></svg>
<svg style="left:447px;top:28px" width="8" height="8" shape-rendering="crispEdges"><path d="M2 0H6V2H8V6H6V8H2V6H0V2H2Z" fill="#f0f0f0"/><path d="M3 1H5V3H7V5H5V7H3V5H1V3H3Z" fill="#7faa7f"/></svg>
<svg style="left:439px;top:36px;will-change:transform" width="16" height="10"><text x="0" y="8.9" font-family="Liberation Sans,sans-serif" font-size="9" letter-spacing="-0.3" fill="#6f9f6f">a<tspan fill="#c06878">+</tspan>b</text></svg>
<svg style="left:461px;top:32px" width="13" height="12" shape-rendering="crispEdges"><rect x="0" y="0" width="13" height="12" rx="1" fill="#444"/><rect x="1" y="2" width="3" height="2" fill="#fff"/><rect x="5" y="2" width="3" height="2" fill="#88dd88"/><rect x="9" y="2" width="3" height="2" fill="#fff"/><rect x="1" y="5" width="3" height="2" fill="#fff"/><rect x="5" y="5" width="3" height="2" fill="#88dd88"/><rect x="9" y="5" width="3" height="2" fill="#fff"/><rect x="1" y="8" width="3" height="2" fill="#fff"/><rect x="5" y="8" width="3" height="2" fill="#88dd88"/><rect x="9" y="8" width="3" height="2" fill="#fff"/></svg>
<svg style="left:470px;top:29px" width="8" height="8"><circle cx="4" cy="4" r="3.9" fill="#f0f0f0"/><circle cx="4" cy="4" r="3.1" fill="#0066cc"/></svg>
<svg style="left:487px;top:31px" width="11" height="11"><path d="M2 2L9 9" stroke="#444" stroke-width="1.8"/><path d="M0 0H5L0 5Z M11 11H6L11 6Z" fill="#444"/></svg>
<svg style="left:500px;top:32px" width="8" height="4" shape-rendering="crispEdges"><path d="M0 0H8V1H0Z M1 1H7V2H1Z M2 2H6V3H2Z M3 3H5V4H3Z" fill="#444"/></svg>
<svg style="left:518px;top:29px" width="16" height="13" shape-rendering="crispEdges"><rect x="0" y="2" width="4" height="11" fill="#b98d8d"/><rect x="5" y="2" width="4" height="11" fill="#8fad8f"/><rect x="10" y="6" width="4" height="7" fill="#809fc0"/><circle cx="12.5" cy="2.5" r="2.6" fill="#b98d8d" shape-rendering="auto"/></svg>
<svg style="left:544px;top:33px" width="8" height="8"><path d="M1 1L7 7M7 1L1 7" stroke="#d93030" stroke-width="2" fill="none"/></svg>
<svg style="left:565px;top:30px;will-change:transform" width="16" height="14"><text x="0" y="6" transform="scale(1.1,1)" font-family="Liberation Serif,serif" font-style="italic" font-weight="bold" font-size="11" fill="#2e9a2e" letter-spacing="0">a</text><text x="0" y="13" transform="scale(1.1,1)" font-family="Liberation Serif,serif" font-style="italic" font-weight="bold" font-size="11" fill="#555" letter-spacing="0">z</text><path d="M10.7 0V12.3 M8 9.4L10.7 12.4L13.4 9.4" stroke="#2a2a2a" stroke-width="1.25" fill="none"/></svg>
</body></html>
